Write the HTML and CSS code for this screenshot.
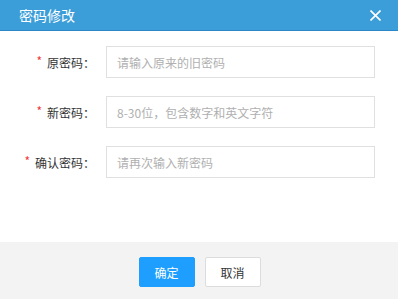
FILE: index.html
```html
<!DOCTYPE html>
<html lang="zh">
<head>
<meta charset="utf-8">
<link rel="stylesheet" href="styles.css">
</head>
<body>
<div class="dialog">
  <div class="header">
    <span class="title">密码修改</span>
    <span class="close">
      <svg width="11" height="11" viewBox="0 0 11 11"><path d="M0.5 0.5 L10.5 10.5 M10.5 0.5 L0.5 10.5" stroke="#fff" stroke-width="1.6" fill="none"/></svg>
    </span>
  </div>
  <div class="body">
    <div class="row">
      <label class="label"><span class="star">*</span>原密码：</label>
      <input class="input" type="password" placeholder="请输入原来的旧密码">
    </div>
    <div class="row">
      <label class="label"><span class="star">*</span>新密码：</label>
      <input class="input" type="password" placeholder="8-30位，包含数字和英文字符">
    </div>
    <div class="row">
      <label class="label"><span class="star">*</span>确认密码：</label>
      <input class="input" type="password" placeholder="请再次输入新密码">
    </div>
  </div>
  <div class="footer">
    <button class="btn btn-primary">确定</button>
    <button class="btn btn-default">取消</button>
  </div>
</div>
</body>
</html>
```

FILE: styles.css
```css
* { box-sizing: border-box; }
html, body { margin: 0; padding: 0; }
body {
  font-family: "Noto Sans CJK SC", "Noto Sans", sans-serif;
  background: #fff;
}
.dialog {
  width: 398px;
  height: 299px;
  display: flex;
  flex-direction: column;
}
.header {
  height: 31px;
  background: #3b9ed8;
  border-bottom: 1px solid #2d86c7;
  display: flex;
  align-items: center;
  justify-content: space-between;
  padding: 0 17px 0 19px;
}
.title {
  color: #fff;
  font-size: 14px;
  line-height: 30px;
}
.close {
  display: flex;
  width: 11px;
  height: 11px;
}
.body {
  flex: 1;
  padding-top: 15px;
  display: flex;
  flex-direction: column;
  gap: 18px;
}
.row {
  display: flex;
  align-items: center;
  height: 32px;
}
.label {
  width: 96px;
  padding-right: 1px;
  text-align: right;
  font-size: 12px;
  color: #333;
  margin-right: 10px;
}
.star {
  color: #f0383c;
  margin-right: 5px;
  font-size: 12px;
  position: relative;
  top: -2px;
}
.input {
  width: 269px;
  height: 32px;
  border: 1px solid #e0e0e0;
  padding: 0 10px;
  font-family: inherit;
  font-size: 12px;
  color: #333;
  outline: none;
}
.input::placeholder { color: #b0b0b0; }
.footer {
  height: 57px;
  background: #f3f3f3;
  display: flex;
  justify-content: center;
  align-items: flex-start;
  padding-top: 15px;
  padding-left: 1px;
  gap: 10px;
}
.btn {
  width: 56px;
  height: 30px;
  font-family: inherit;
  font-size: 12px;
  border-radius: 2px;
  cursor: pointer;
  padding: 0;
}
.btn-primary {
  background: #1e9fff;
  border: 1px solid #1e9fff;
  color: #fff;
}
.btn-default {
  background: #fff;
  border: 1px solid #dcdcdc;
  color: #333;
}
```
